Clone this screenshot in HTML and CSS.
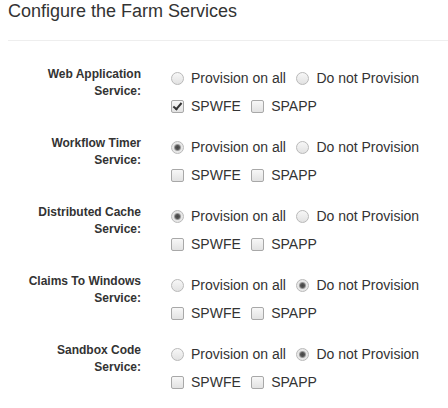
FILE: index.html
```html
<!DOCTYPE html>
<html lang="en">
<head>
  <meta charset="UTF-8" />
  <title>Configure the Farm Services</title>
  <link rel="stylesheet" href="styles.css">
</head>
<body>
  <div class="page">
    <h4 class="title">Configure the Farm Services</h4>
    <hr>

    <form class="services">
      <div class="service-row">
        <div class="service-label">Web Application Service:</div>
        <div class="service-controls">
          <div class="option-line">
            <label class="option"><input type="radio" name="wa"> Provision on all</label>
            <label class="option"><input type="radio" name="wa"> Do not Provision</label>
          </div>
          <div class="option-line">
            <label class="option"><input type="checkbox" checked> SPWFE</label>
            <label class="option"><input type="checkbox"> SPAPP</label>
          </div>
        </div>
      </div>

      <div class="service-row">
        <div class="service-label">Workflow Timer Service:</div>
        <div class="service-controls">
          <div class="option-line">
            <label class="option"><input type="radio" name="wt" checked> Provision on all</label>
            <label class="option"><input type="radio" name="wt"> Do not Provision</label>
          </div>
          <div class="option-line">
            <label class="option"><input type="checkbox"> SPWFE</label>
            <label class="option"><input type="checkbox"> SPAPP</label>
          </div>
        </div>
      </div>

      <div class="service-row">
        <div class="service-label">Distributed Cache Service:</div>
        <div class="service-controls">
          <div class="option-line">
            <label class="option"><input type="radio" name="dc" checked> Provision on all</label>
            <label class="option"><input type="radio" name="dc"> Do not Provision</label>
          </div>
          <div class="option-line">
            <label class="option"><input type="checkbox"> SPWFE</label>
            <label class="option"><input type="checkbox"> SPAPP</label>
          </div>
        </div>
      </div>

      <div class="service-row">
        <div class="service-label">Claims To Windows Service:</div>
        <div class="service-controls">
          <div class="option-line">
            <label class="option"><input type="radio" name="cw"> Provision on all</label>
            <label class="option"><input type="radio" name="cw" checked> Do not Provision</label>
          </div>
          <div class="option-line">
            <label class="option"><input type="checkbox"> SPWFE</label>
            <label class="option"><input type="checkbox"> SPAPP</label>
          </div>
        </div>
      </div>

      <div class="service-row">
        <div class="service-label">Sandbox Code Service:</div>
        <div class="service-controls">
          <div class="option-line">
            <label class="option"><input type="radio" name="sc"> Provision on all</label>
            <label class="option"><input type="radio" name="sc" checked> Do not Provision</label>
          </div>
          <div class="option-line">
            <label class="option"><input type="checkbox"> SPWFE</label>
            <label class="option"><input type="checkbox"> SPAPP</label>
          </div>
        </div>
      </div>
    </form>
  </div>
</body>
</html>
```

FILE: styles.css
```css
body {
  margin: 0;
  font-family: "Liberation Sans", Arial, sans-serif;
  color: #333;
  background: #fff;
}

.page {
  padding-left: 8px;
}

.title {
  font-size: 18px;
  font-weight: normal;
  line-height: 20px;
  margin: 1px 0 0;
}

hr {
  border: 0;
  border-top: 1px solid #eee;
  margin: 19px 0 0;
}

.services {
  padding-top: 25px;
}

.service-row {
  display: flex;
  margin-bottom: 19px;
}

.service-label {
  width: 118px;
  margin-left: 15px;
  text-align: right;
  font-size: 12px;
  font-weight: bold;
  line-height: 17px;
}

.service-controls {
  margin-left: 30px;
  padding-top: 2px;
}

.option-line {
  height: 20px;
}

.option-line + .option-line {
  margin-top: 8px;
}

.option {
  display: inline-block;
  position: relative;
  padding-left: 20px;
  font-size: 14px;
  line-height: 20px;
}

.option + .option {
  margin-left: 6px;
}

.option input {
  -webkit-appearance: none;
  appearance: none;
  position: absolute;
  left: 0;
  top: 4px;
  width: 13px;
  height: 13px;
  margin: 0;
  box-sizing: border-box;
  border: 1px solid #b9b9b9;
  background: linear-gradient(#f7f7f7, #e2e2e2);
}

.option input[type="radio"] {
  border-radius: 50%;
}

.option input[type="radio"]:checked {
  background: radial-gradient(circle, #444 0, #555 2px, #999 3px, #e6e6e6 4px, #ececec 100%);
}

.option input[type="checkbox"] {
  border-radius: 2px;
  border-color: #a8a8a8;
}

.option input[type="checkbox"]:checked::after {
  content: "";
  position: absolute;
  left: 3px;
  top: 0px;
  width: 3px;
  height: 7px;
  border: solid #333;
  border-width: 0 2px 2px 0;
  transform: rotate(40deg);
}
```
